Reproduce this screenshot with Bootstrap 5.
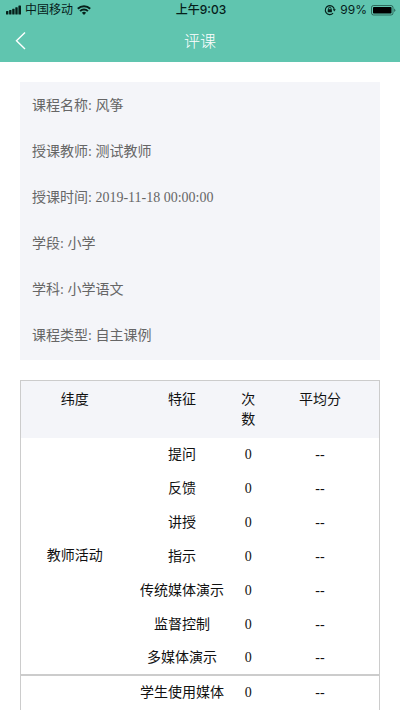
<!DOCTYPE html>
<html lang="zh-CN">
<head>
<meta charset="utf-8">
<meta name="viewport" content="width=device-width, initial-scale=1">
<title>评课</title>
<link href="https://cdn.jsdelivr.net/npm/bootstrap@5.3.0/dist/css/bootstrap.min.css" rel="stylesheet">
<style>
  body { font-family: "Liberation Serif", "Noto Sans CJK SC", serif; font-size: 14px; line-height: 20px; color: #111; background: #fff; }
  .app-header { background: #60c5af; }
  .status-bar { height: 20px; padding: 0 4px 0 6px; font-family: Inter, "Noto Sans CJK SC", sans-serif; font-size: 12px; line-height: 20px; color: #06201a; }
  .status-side { flex: 1 1 0; gap: 4px; }
  .clock { font-weight: 500; }
  .title-bar { height: 42px; padding: 0 12px 2px; font-family: "Noto Sans CJK SC", sans-serif; }
  .title-bar h1 { font-size: 16px; line-height: 24px; font-weight: 300; }
  .side-slot { width: 24px; height: 24px; }
  .page-body { padding: 20px 20px 0; scrollbar-width: none; }
  .page-body::-webkit-scrollbar { display: none; }
  .info-panel { background: #f4f5f9; color: #666; padding: 1px 12px; margin-bottom: 20px; }
  .info-line { height: 46px; }
  .score-table { table-layout: fixed; border: 1px solid #ccc; border-bottom: 0; border-collapse: separate; border-spacing: 0; }
  .score-table th { background: #f4f5f9; padding: 9px 4px 8px; font-weight: 400; vertical-align: top; }
  .score-table td { height: 34px; padding: 0; white-space: nowrap; }
  .score-table .group-end > td, .score-table td.group-name { border-bottom: 2px solid #ccc; }
  .w-dim { width: 30%; } .w-feature { width: 30%; } .w-count { width: 7%; } .w-avg { width: 33%; }
</style>
<script src="https://cdn.jsdelivr.net/npm/bootstrap@5.3.0/dist/js/bootstrap.bundle.min.js"></script>
</head>
<body>
<div class="d-flex flex-column vh-100">
  <header class="app-header flex-shrink-0">
    <div class="status-bar d-flex align-items-center">
      <div class="status-side d-flex align-items-center">
        <svg width="15" height="10" viewBox="0 0 15 10" fill="currentColor" aria-hidden="true"><rect x="0" y="6" width="2.4" height="3.5" rx=".6"/><rect x="3.1" y="5" width="2.4" height="4.5" rx=".6"/><rect x="6.2" y="3.8" width="2.4" height="5.7" rx=".6"/><rect x="9.3" y="2.2" width="2.4" height="7.3" rx=".6"/><rect x="12.4" y=".5" width="2.6" height="9" rx=".6"/></svg>
        <span>中国移动</span>
        <svg width="14" height="10" viewBox="0 0 14 10" aria-hidden="true"><g fill="none" stroke="currentColor" stroke-width="2"><path d="M.8 3.7a8.8 8.8 0 0 1 12.4 0"/><path d="M3.1 6.1a5.5 5.5 0 0 1 7.8 0"/></g><path d="M4.9 7.8a3 3 0 0 1 4.2 0L7 9.9z" fill="currentColor"/></svg>
      </div>
      <span class="clock">上午9:03</span>
      <div class="status-side d-flex align-items-center justify-content-end">
        <svg width="12" height="12" viewBox="0 0 12 12" aria-hidden="true"><g fill="none" stroke="currentColor"><path d="M9.1 9.2A4.5 4.5 0 1 1 10.3 5.6" stroke-width="1.1"/><path d="M4.6 5.6V4.4a1.2 1.2 0 0 1 2.4 0v1.2" stroke-width=".9"/></g><rect x="3.7" y="5.2" width="4.2" height="3.1" rx=".4" fill="currentColor"/><path d="M8.8 5.3h3L10.3 7.4z" fill="currentColor"/></svg>
        <span>99%</span>
        <svg width="25" height="11" viewBox="0 0 25 11" aria-hidden="true"><rect x=".5" y=".5" width="21.5" height="9.5" rx="2" fill="none" stroke="currentColor" stroke-opacity=".55"/><rect x="2" y="2" width="18.5" height="6.5" rx=".8" fill="#000"/><path d="M23.2 3.5v3.5q1.1-.5 1.1-1.75T23.2 3.5" fill="currentColor" fill-opacity=".6"/></svg>
      </div>
    </div>
    <div class="title-bar d-flex align-items-center justify-content-between text-white">
      <button type="button" class="side-slot btn p-0 border-0 text-white d-flex" aria-label="返回">
        <svg width="16" height="24" viewBox="0 0 16 24" fill="none" stroke="currentColor" stroke-width="1.4" aria-hidden="true"><path d="M13 4.5 4.5 12.7 13 20.9"/></svg>
      </button>
      <h1 class="m-0">评课</h1>
      <span class="side-slot"></span>
    </div>
  </header>
  <main class="page-body flex-grow-1 overflow-auto">
    <section class="info-panel">
      <div class="info-line d-flex align-items-center">课程名称: 风筝</div>
      <div class="info-line d-flex align-items-center">授课教师: 测试教师</div>
      <div class="info-line d-flex align-items-center">授课时间: 2019-11-18 00:00:00</div>
      <div class="info-line d-flex align-items-center">学段: 小学</div>
      <div class="info-line d-flex align-items-center">学科: 小学语文</div>
      <div class="info-line d-flex align-items-center">课程类型: 自主课例</div>
    </section>
    <table class="score-table w-100 text-center align-middle">
      <thead>
        <tr><th class="w-dim" scope="col">纬度</th><th class="w-feature" scope="col">特征</th><th class="w-count" scope="col">次<br>数</th><th class="w-avg" scope="col">平均分</th></tr>
      </thead>
      <tbody>
        <tr><td class="group-name" rowspan="7">教师活动</td><td>提问</td><td>0</td><td>--</td></tr>
        <tr><td>反馈</td><td>0</td><td>--</td></tr>
        <tr><td>讲授</td><td>0</td><td>--</td></tr>
        <tr><td>指示</td><td>0</td><td>--</td></tr>
        <tr><td>传统媒体演示</td><td>0</td><td>--</td></tr>
        <tr><td>监督控制</td><td>0</td><td>--</td></tr>
        <tr class="group-end"><td>多媒体演示</td><td>0</td><td>--</td></tr>
      </tbody>
      <tbody>
        <tr><td></td><td>学生使用媒体</td><td>0</td><td>--</td></tr>
      </tbody>
    </table>
  </main>
</div>
</body>
</html>
